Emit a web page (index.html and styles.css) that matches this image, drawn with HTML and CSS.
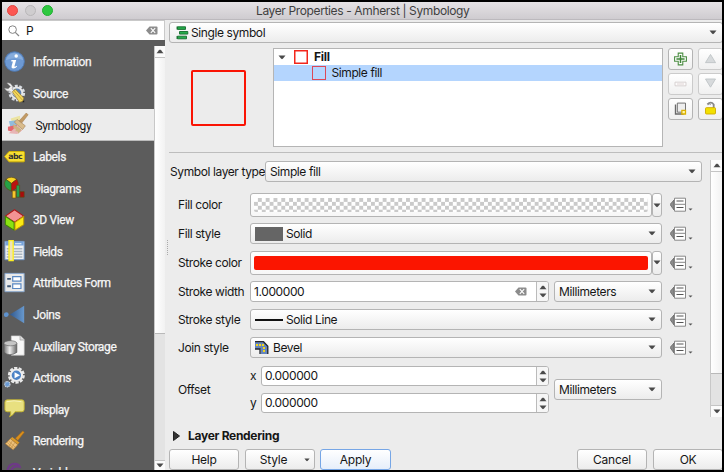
FILE: index.html
```html
<!DOCTYPE html>
<html lang="en">
<head>
<meta charset="utf-8">
<title>Layer Properties - Amherst | Symbology</title>
<link rel="stylesheet" href="styles.css">
</head>
<body>
<svg class="defs" width="0" height="0">
  <symbol id="override" viewBox="0 0 24 16">
    <path d="M0 7.500 4 3v10z" fill="#8b8b8b" stroke="#666" stroke-width=".8"/>
    <path d="M4.500 1.200h11v13h-11z" fill="#fff" stroke="#888" stroke-width="1"/>
    <path d="M6.500 4h7M6.500 10.500h7" stroke="#555" stroke-width="1.100"/>
    <path d="M4 7.300h11" stroke="#888" stroke-width="1"/>
    <path d="M18.500 11.500h4l-2 2z" fill="#555"/>
  </symbol>
  <symbol id="down" viewBox="0 0 8 5"><path d="M.5.5h7L5 3.500 4 4.200 3 3.500z" fill="#4a4a4a"/></symbol>
  <symbol id="up" viewBox="0 0 8 5"><path d="M.5 4.200h7L5 1.200 4 .5 3 1.200z" fill="#4a4a4a"/></symbol>
  <symbol id="clear" viewBox="0 0 12 9">
    <path d="M0 4.500 3.500.5h7q1 0 1 1v6q0 1-1 1h-7z" fill="#8c8c8c"/>
    <path d="M4.800 2.200l4.400 4.600M9.200 2.200 4.800 6.800" stroke="#fff" stroke-width="1.100"/>
  </symbol>
</svg>
<div class="window">
  <header class="titlebar">
    <div class="lights"><i class="light close"></i><i class="light min"></i><i class="light max"></i></div>
    <span class="title">Layer Properties - Amherst | Symbology</span>
  </header>
  <div class="body">
    <aside class="side">
      <div class="search">
        <svg width="12" height="12" viewBox="0 0 12 12"><circle cx="4.600" cy="4.600" r="3.800" fill="none" stroke="#858585"/><path d="M7.300 7.300 11 11" stroke="#858585" stroke-width="1.200"/></svg>
        <span class="query">P</span>
        <svg class="clear" width="12" height="9"><use href="#clear"/></svg>
      </div>
      <div class="sidelist">
        <nav class="items">
          <div class="item">
            <svg class="ic" viewBox="0 0 24 24"><circle cx="11.500" cy="11.500" r="10.700" fill="#6d99d3" stroke="#4d79b5"/><path d="M2 10a9.700 9.700 0 0 1 19 0q-9-4-19 0z" fill="#86acdc"/><circle cx="13.300" cy="5.500" r="1.900" fill="#fff"/><path d="M8 9.800h5.300l-2 7.200q1.300.2 2.600-1l.4.800q-1.800 2.200-4.300 2.200-2.300-.2-1.700-2.500l1.400-5H8z" fill="#fff"/></svg>
            <span>Information</span></div>
          <div class="item">
            <svg class="ic" viewBox="0 0 24 24"><circle cx="14" cy="12" r="7.800" fill="none" stroke="#d9dee4" stroke-width="2.500" stroke-dasharray="3.200 1.700"/><circle cx="14" cy="12" r="6" fill="#5d80ab" stroke="#e7e7e7" stroke-width="2.200"/><path d="M3 1q4-1 6 3 .6 2-.1 3.600L19 18l-2.500 2.600L6.500 10q-4 1-6-3.500l4 .8L7 5z" fill="#eee" stroke="#777" stroke-width=".5"/><path d="M9 10.500 12.500 8l9 9.500-1 3.500-3.600 1.200z" fill="#f1d65d" stroke="#93752b" stroke-width=".7"/><path d="m11 9.500 9.500 10.700" stroke="#c7a231"/><path d="m20.500 21 1.500-1v2h-2z" fill="#222"/></svg>
            <span>Source</span></div>
          <div class="item selected">
            <svg class="ic" viewBox="0 0 24 24"><path d="M4 6 14 3l1 8-8 3z" fill="#ece4a1"/><path d="m2 9 8-1 1 7-7 1z" fill="#91bcdd"/><path d="m1 15 9-2 6 6-4 3-11-3z" fill="#e2666d"/><path d="m2 22 10-9 4 6-5 4z" fill="#e8b5b5"/><path d="m21 0 2 2-7 9-3-2z" fill="#c29a64" stroke="#a37b4b" stroke-width=".6"/><path d="m8 10 3-3 9 7-3 4z" fill="#d9bc8c" stroke="#a88457" stroke-width=".7"/><path d="m7 12 9 6-4 5q1-4-3-3 2-4-2-3z" fill="#ceb382"/></svg>
            <span>Symbology</span></div>
          <div class="item">
            <svg class="ic" viewBox="0 0 24 24"><path d="M.7 11.500 5.500 6h15.800q1 0 1 1v9.300q0 1-1 1H5.500z" fill="#f8df32" stroke="#d4b300"/><text x="4.500" y="14.500" class="abc">abc</text></svg>
            <span>Labels</span></div>
          <div class="item">
            <svg class="ic" viewBox="0 0 24 24"><g stroke="#5d4a12" stroke-width=".7"><path d="M8 7 2 2.500Q8-2 14 2.500z" fill="#f9d423"/><path d="M8 7v8.500Q-3 11 2 2.500z" fill="#25a046"/><path d="M8 7l6-4.500Q19 11 8 15.500z" fill="#bd1010"/><path d="M9 15h4v8H9z" fill="#f9c72c"/><path d="M13.500 9h3.500v13h-3.500z" fill="#259e50"/><path d="M17.500 16H22v6h-4.500z" fill="#a90b0b"/></g></svg>
            <span>Diagrams</span></div>
          <div class="item">
            <svg class="ic" viewBox="0 0 24 24"><g stroke-width="1.100" stroke-linejoin="round"><path d="m11.500.8 10 7-10 6.500-10-6.500z" fill="#f39393" stroke="#b11616"/><path d="m1.500 8 9.500 6.500V23l-9.500-6z" fill="#8be211" stroke="#3d8b00"/><path d="m21.500 8-9.500 6.500V23l9.500-6z" fill="#fbea13" stroke="#bd9b00"/></g></svg>
            <span>3D View</span></div>
          <div class="item">
            <svg class="ic" viewBox="0 0 24 24"><path d="M1 1.500h21v20H1z" fill="#eef0f2" stroke="#6b93c4"/><path d="M1.500 2h20v4h-20z" fill="#76a3da"/><path d="M3 9.500h17M3 12.500h17M3 15.500h17M3 18.500h17" stroke="#aab5c0" stroke-width="1.500"/><path d="M12 4h7" stroke="#d2e2f4" stroke-width="1.500"/><path d="M5.500.5h4.500v22H5.500z" fill="#eee3b8" stroke="#fcee21" stroke-width="1.500"/></svg>
            <span>Fields</span></div>
          <div class="item">
            <svg class="ic" viewBox="0 0 24 24"><path d="M1 1.500h21v20H1z" fill="#e9e9e9" stroke="#86a6cf"/><path d="M3.500 7.500h4M3.500 15.500h4" stroke="#425b7a" stroke-width="2"/><path d="M9.500 5h9v5h-9zM9.500 13h9v5h-9z" fill="#fff" stroke="#5a88c2" stroke-width="1.300"/></svg>
            <span>Attributes Form</span></div>
          <div class="item">
            <svg class="ic" viewBox="0 0 24 24"><defs><linearGradient id="jg"><stop stop-color="#31598f"/><stop offset="1" stop-color="#6899ce"/></linearGradient></defs><path d="M6.500 11.500 22 2v19z" fill="url(#jg)"/><circle cx="2.500" cy="11.500" r="2.600" fill="#5f93cf"/></svg>
            <span>Joins</span></div>
          <div class="item">
            <svg class="ic" viewBox="0 0 24 24"><path d="M8 1h10l4 4v17H8z" fill="#f7f7f7" stroke="#ccc" stroke-width=".7"/><path d="M17.500 1v4.500H22" fill="#ddd" stroke="#999" stroke-width=".7"/><defs><linearGradient id="cg"><stop stop-color="#777"/><stop offset=".45" stop-color="#eee"/><stop offset="1" stop-color="#666"/></linearGradient></defs><path d="M0 9v10q6 5 14 0V9z" fill="url(#cg)" stroke="#555" stroke-width=".7"/><ellipse cx="7" cy="9" rx="7" ry="2.800" fill="#c6c6c6" stroke="#666" stroke-width=".7"/></svg>
            <span>Auxiliary Storage</span></div>
          <div class="item">
            <svg class="ic" viewBox="0 0 24 24"><circle cx="13.500" cy="9" r="8" fill="none" stroke="#e9e9e9" stroke-width="2.500" stroke-dasharray="3.500 1.500"/><circle cx="13.500" cy="9" r="6.200" fill="#4b82c6" stroke="#eee" stroke-width="2.200"/><path d="m11.500 5.800 6 3.200-6 3.300z" fill="#fff"/><circle cx="3.600" cy="18.800" r="2.900" fill="#6a9ad3" stroke="#ccd5df" stroke-dasharray="1.300 .6" stroke-width="1.300"/></svg>
            <span>Actions</span></div>
          <div class="item">
            <svg class="ic" viewBox="0 0 24 24"><path d="M3.500 2h16q2.500 0 2.500 2.500v8q0 2.500-2.500 2.500H12q-2 4-6 5.500Q8 18 7.300 15H3.500Q1 15 1 12.500v-8Q1 2 3.500 2z" fill="#e8e080" stroke="#c4b52e"/><path d="M3 4q8-2 16 0" stroke="#f7f4c4" fill="none"/></svg>
            <span>Display</span></div>
          <div class="item">
            <svg class="ic" viewBox="0 0 24 24"><path d="m12.500 9 8-8 1.600 1.500-7 9z" fill="#d98e1c" stroke="#a86a12" stroke-width=".6"/><path d="M9 7.500 17 14l-2.200 1.600L7 9.500z" fill="#dc9a28"/><path d="m7 9.500 8 6.500-5 5.500L1.500 15z" fill="#ecc07a" stroke="#b27c2d" stroke-width=".7"/><path d="m5 12 7 6.500M3.500 13.500l7 6.500M9.500 11l-4 7M12 13.500l-4 6" stroke="#bc883d" stroke-width=".6"/></svg>
            <span>Rendering</span></div>
          <div class="item">
            <svg class="ic" viewBox="0 0 24 24"><path d="M4 9q1-7 8-7 4 0 5 3-4-1-7 1-3 2-2 8" fill="none" stroke="#6d3a86" stroke-width="2.500"/></svg>
            <span>Variables</span></div>
        </nav>
        <div class="scroll side-scroll"><b><svg width="8" height="5"><use href="#up"/></svg></b><em></em><u></u><b><svg width="8" height="5"><use href="#down"/></svg></b></div>
      </div>
    </aside>
    <div class="splitter"><i></i></div>
    <main class="main">
      <div class="box combo renderer">
        <svg width="13" height="14" viewBox="0 0 13 14"><g fill="#26ad4b" stroke="#146b2d" stroke-width=".9"><path d="M1.500.8h8v2.600h-8zM3.500 5.500h8.300v2.600H3.500zM1.500 10.200h9v2.600h-9z"/><path d="M1 .5v3M1 10v3" fill="none"/></g></svg>
        <span>Single symbol</span><svg class="car" width="8" height="5"><use href="#down"/></svg>
      </div>
      <section class="symbol">
        <div class="preview"><div class="square"></div></div>
        <div class="tree">
          <div class="node"><svg width="8" height="5"><use href="#down"/></svg><i class="sw"></i><span class="bold">Fill</span></div>
          <div class="node child"><i class="sw"></i><span>Simple fill</span></div>
        </div>
        <div class="tools">
          <div class="tool"><svg viewBox="0 0 24 22"><path d="M9.500 4.500h5v4h4v5h-4v4h-5v-4h-4v-5h4z" fill="#fff" stroke="#4b8d42" stroke-width="1.200"/><path d="M12 6.500v9M7.500 11h9" stroke="#3f8438" stroke-width="1.700"/></svg></div>
          <div class="tool off"><svg viewBox="0 0 24 22"><path d="m12 6 5.500 9h-11z" fill="#d7dadc" stroke="#bfc4c7"/></svg></div>
          <div class="tool off"><svg viewBox="0 0 24 22"><path d="M6 9h12v4H6z" fill="#fff" stroke="#d3cccc"/><path d="M8 11h8" stroke="#e0d5d5" stroke-width="1.200"/></svg></div>
          <div class="tool off"><svg viewBox="0 0 24 22"><path d="M6.500 5.500h11l-5.500 9z" fill="#d7dadc" stroke="#bfc4c7"/></svg></div>
          <div class="tool"><svg viewBox="0 0 24 22"><path d="M6.500 6v10.500h9" fill="none" stroke="#696969" stroke-width="1.500"/><path d="M8.500 4.500h9v10h-9z" fill="#eee" stroke="#686868"/><path d="M13.500 12.500h4v4h-4z" fill="#fff6a8" stroke="#dbb000" stroke-width="1.400"/></svg></div>
          <div class="tool"><svg viewBox="0 0 24 22"><path d="M8.500 6q4-4 7 0v4" fill="none" stroke="#888" stroke-width="2"/><path d="M9 6.500q2.500-2 3.500 0" fill="none" stroke="#999"/><rect x="6.500" y="9.500" width="11" height="7" rx="1" fill="#f2e000" stroke="#d0aa00"/></svg></div>
        </div>
      </section>
      <section class="scrollarea">
        <div class="form">
          <div class="row type"><label>Symbol layer type</label><div class="box combo grow"><span>Simple fill</span><svg class="car" width="8" height="5"><use href="#down"/></svg></div></div>
          <div class="row tall"><label>Fill color</label><div class="box color"><i class="checker"></i></div><div class="box drop"><svg width="8" height="5"><use href="#down"/></svg></div><svg class="ov"><use href="#override"/></svg></div>
          <div class="row"><label>Fill style</label><div class="box combo grow"><i class="solid"></i><span>Solid</span><svg class="car" width="8" height="5"><use href="#down"/></svg></div><svg class="ov"><use href="#override"/></svg></div>
          <div class="row tall stroke"><label>Stroke color</label><div class="box color"><i class="red"></i></div><div class="box drop"><svg width="8" height="5"><use href="#down"/></svg></div><svg class="ov"><use href="#override"/></svg></div>
          <div class="row"><label>Stroke width</label><div class="box spin"><span class="num">1.000000</span><svg class="clear" width="12" height="9"><use href="#clear"/></svg><div class="steps"><svg width="8" height="5"><use href="#up"/></svg><svg width="8" height="5"><use href="#down"/></svg></div></div><div class="box combo unit"><span>Millimeters</span><svg class="car" width="8" height="5"><use href="#down"/></svg></div><svg class="ov"><use href="#override"/></svg></div>
          <div class="row r7"><label>Stroke style</label><div class="box combo grow"><i class="line"></i><span>Solid Line</span><svg class="car" width="8" height="5"><use href="#down"/></svg></div><svg class="ov"><use href="#override"/></svg></div>
          <div class="row r7"><label>Join style</label><div class="box combo grow"><svg class="join" width="14" height="13" viewBox="0 0 14 13"><path d="M0 .5h8.500L13 5v8H5.500V8H0z" fill="#6686bd"/><path d="M0 .7h8.500l4.300 4.500V13M0 8h5v5" fill="none" stroke="#26292e" stroke-width="1.300"/><path d="M1 3h2v2H1zM4 3h2v2H4zM7 3h2v2H7zM8 6h2v2H8zM8 9h2v2H8z" fill="#f4d619"/></svg><span>Bevel</span><svg class="car" width="8" height="5"><use href="#down"/></svg></div><svg class="ov"><use href="#override"/></svg></div>
          <div class="row offset"><label>Offset</label>
            <div class="xy">
              <div class="axis"><span>x</span><div class="box spin"><span class="num">0.000000</span><div class="steps"><svg width="8" height="5"><use href="#up"/></svg><svg width="8" height="5"><use href="#down"/></svg></div></div></div>
              <div class="axis"><span>y</span><div class="box spin"><span class="num">0.000000</span><div class="steps"><svg width="8" height="5"><use href="#up"/></svg><svg width="8" height="5"><use href="#down"/></svg></div></div></div>
            </div>
            <div class="box combo unit"><span>Millimeters</span><svg class="car" width="8" height="5"><use href="#down"/></svg></div>
          </div>
        </div>
        <div class="scroll form-scroll"><b><svg width="8" height="5"><use href="#up"/></svg></b><em></em><u></u><b><svg width="8" height="5"><use href="#down"/></svg></b></div>
      </section>
      <div class="rendering"><svg width="7" height="10" viewBox="0 0 7 10"><path d="M.5.5v9L6.500 5z" fill="#333" stroke="#222"/></svg><span class="bold">Layer Rendering</span></div>
      <footer class="footer">
        <div class="box btn"><span>Help</span></div>
        <div class="box btn style"><span>Style</span><svg width="6" height="4"><use href="#down"/></svg></div>
        <div class="box btn apply"><span>Apply</span></div>
        <div class="box btn cancel"><span>Cancel</span></div>
        <div class="box btn ok"><span>OK</span></div>
      </footer>
    </main>
  </div>
</div>
</body>
</html>
```
FILE: styles.css
```css
* { box-sizing: border-box; }
body { margin: 0; font: 12px/16px Inter, "Liberation Sans", sans-serif; letter-spacing: -.4px; color: #161616; }
svg { display: block; flex: none; }
i, em, u, b { display: block; flex: none; font-style: normal; text-decoration: none; }
span, label { white-space: nowrap; }
.defs { position: absolute; }
.window { width: 724px; height: 472px; border: 2px solid #000; background: #ececec; overflow: hidden; display: flex; flex-direction: column; }
.bold { font-weight: 700; letter-spacing: -.3px; }

.titlebar { height: 18px; flex: none; background: linear-gradient(#e5e2e5, #cfccd0); border-bottom: 1px solid #bcb9bd; display: flex; align-items: center; }
.lights { display: flex; gap: 6.500px; width: 254px; padding-left: 5px; }
.light { width: 11px; height: 11px; border-radius: 50%; }
.close { background: #fc5753; border: 1px solid #e2463f; }
.min { background: #cfcdcf; border: 1px solid #b9b7b9; }
.max { background: #2fc840; border: 1px solid #1fb030; }
.title { color: #3f3f3f; letter-spacing: -.37px; }

.body { flex: 1; display: flex; min-height: 0; }
.side { width: 163px; flex: none; background: #5c5c5c; display: flex; flex-direction: column; }
.search { height: 20px; flex: none; background: #fff; border: 1px solid #c9c9c9; border-left: 0; border-bottom: 0; display: flex; align-items: center; padding: 0 6px; }
.query { margin-left: 6px; flex: 1; }
.sidelist { flex: 1; display: flex; min-height: 0; padding-top: 6px; }
.items { width: 151.500px; flex: none; overflow: hidden; }
.item { height: 31.600px; display: flex; align-items: center; gap: 7px; padding-left: 2px; color: #f6f6f6; font: 400 12px/16px Roboto, sans-serif; -webkit-text-stroke: .25px currentColor; }
.item span { padding-top: 1px; letter-spacing: -.37px; }
.ic { width: 22px; height: 22px; -webkit-text-stroke: 0; }
.selected { background: #ececec; color: #161616; padding-left: 4.500px; border-bottom: 1px solid #bbb; -webkit-text-stroke: 0; }
.selected span { padding-top: 3px; }
.abc { font: 700 8.500px "DejaVu Sans", sans-serif; letter-spacing: -.5px; fill: #333; }
.scroll { display: flex; flex-direction: column; background: #e3e3e3; border-left: 1px solid #c8c8c8; }
.scroll b { height: 12px; background: #fbfbfb; display: flex; align-items: center; justify-content: center; border-bottom: 1px solid #c4c4c4; }
.scroll em { background: linear-gradient(90deg, #fff, #f2f2f2); border-bottom: 1px solid #b9b9b9; }
.scroll u { flex: 1; }
.side-scroll { flex: 1; }
.side-scroll em { height: 276px; }
.scroll b:last-child { border-bottom: 0; border-top: 1px solid #c4c4c4; }
.side-scroll b:last-child { height: 10px; }

.splitter { width: 4px; flex: none; display: flex; align-items: center; justify-content: center; padding-top: 4px; }
.splitter i { width: 1px; height: 15px; background: repeating-linear-gradient(#aaa 0 1px, transparent 1px 2px); }
.main { flex: 1; min-width: 0; padding-top: 2px; display: flex; flex-direction: column; }
.box { border: 1px solid #b4b4b4; border-radius: 3px; background: linear-gradient(#fff, #ececec); display: flex; align-items: center; }
.combo { height: 21px; padding: 0 5px 0 4px; }
.car { margin-left: auto; margin-right: 0; }
.renderer { flex: none; padding-left: 6px; margin-right: -1px; }
.renderer span { margin-left: 2px; }

.symbol { height: 110px; flex: none; padding-top: 5px; display: flex; border-bottom: 1px solid #bdbdbd; }
.preview { width: 104px; flex: none; padding: 22px 0 0 22px; }
.square { width: 55px; height: 56px; border: 2px solid #fa1404; border-radius: 2px; }
.tree { width: 390px; height: 99px; background: #fff; border: 1px solid #b5b5b5; flex: none; }
.node { height: 16px; display: flex; align-items: center; padding-left: 4px; }
.node .sw { width: 14px; height: 14px; border: 1px solid #f3271c; box-shadow: inset 0 0 0 .5px #f3271c; margin: 0 6px 0 8px; }
.node.child { background: #b4d5fe; padding-left: 29.500px; }
.child .sw { border-color: #dc4857; box-shadow: none; }
.tools { display: grid; grid-template-columns: 25px 25px; grid-template-rows: repeat(3, 22px); gap: 3px 5px; margin-left: 5px; flex: none; }
.tool { border: 1px solid #b4b4b4; border-radius: 3px; background: linear-gradient(#fff, #f0f0f0); }
.tool svg { width: 23px; height: 20px; }
.off { border-color: #cbcbcb; }

.scrollarea { display: flex; height: 257px; margin-top: 7px; flex: none; }
.form { width: 542px; padding-top: 1px; }
.row { display: flex; align-items: center; height: 21px; padding-left: 9px; margin-top: 6px; width: 524px; }
.row label { width: 72px; flex: none; }
.row.type { width: 533px; padding-left: 1px; margin: 0 0 11px; }
.row.type label { width: 95px; }
.row.tall { height: 24px; }
.row.stroke { height: 25px; }
.row.type + .tall { margin-top: 11px; }
.row.r7 { margin-top: 7px; }
.grow { flex: none; width: 412px; }
.type .grow { width: 437px; }
.color { width: 402px; height: 24px; padding: 0 3px; flex: none; background: linear-gradient(#fff, #f7f7f7); }
.color i { width: 394px; height: 14px; border-radius: 2px; }
.checker { background: repeating-conic-gradient(#cacaca 0 25%, #fff 0 50%) 0 0 / 7.800px 7.800px; }
.red { background: #fb1500; }
.drop { width: 10px; height: 24px; justify-content: center; flex: none; }
.ov { width: 24px; height: 16px; margin-left: 8px; }
.solid { width: 28px; height: 14px; background: #656565; margin-right: 3px; }
.line { width: 28px; height: 2px; background: #111; margin-right: 3px; }
.join { margin-right: 4px; }
.spin { width: 299px; height: 21px; padding-left: 3px; background: #fff; flex: none; overflow: hidden; }
.num { flex: 1; }
.spin .clear { margin-right: 9px; }
.steps { width: 12px; height: 100%; border-left: 1px solid #bbb; background: #f6f6f6; display: flex; flex-direction: column; align-items: center; justify-content: center; gap: 3px; }
.unit { width: 108px; margin-left: 5px; flex: none; }
.row.offset { height: 47px; margin-top: 8px; }
.xy { display: flex; flex-direction: column; gap: 7px; }
.axis { display: flex; align-items: center; }
.axis > span { width: 11px; }
.axis .spin { width: 288px; height: 20px; }
.form-scroll { width: 12px; }
.form-scroll em { height: 202px; }

.rendering { display: flex; align-items: center; height: 16px; margin-top: 11px; padding-left: 4px; }
.rendering span { margin-left: 8px; }
.footer { display: flex; margin-top: 5px; height: 21px; flex: none; }
.btn { width: 70px; height: 21px; justify-content: center; flex: none; margin-right: 6px; }
.btn span { letter-spacing: -.25px; }
.style { margin-right: 5px; padding-left: 10px; }
.style svg { margin-left: 17px; }
.apply { width: 71px; border-color: #76a6e6; background: linear-gradient(#fff, #e6eefa); margin-right: 0; }
.cancel { margin-left: auto; }
.ok { margin-right: -1px; }
```
